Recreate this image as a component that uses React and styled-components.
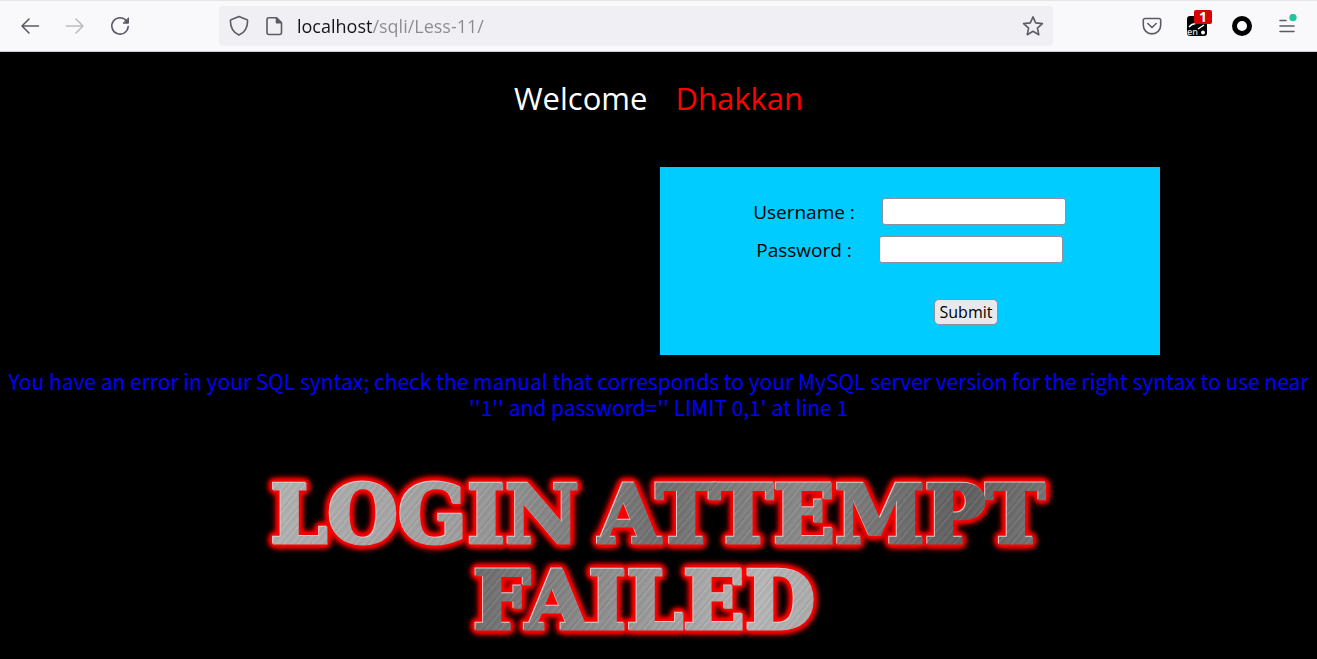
import React from "react";
import styled, { createGlobalStyle } from "styled-components";

const GlobalStyle = createGlobalStyle`
  * { box-sizing: border-box; }
  html { min-height: 100%; background: #000; }
  body {
    margin: 0;
    background: #000;
    font-family: "Open Sans", "Noto Sans", sans-serif;
  }
`;

const Toolbar = styled.header`
  display: flex;
  align-items: center;
  height: 52px;
  padding: 0 18px;
  background: #f9f9fb;
  border-top: 1px solid #e6e6ea;
  border-bottom: 1px solid #ccccd2;
`;

const Group = styled.div`
  display: flex;
  flex: ${(p) => p.$basis};
  justify-content: ${(p) => p.$justify || "flex-start"};
  gap: 21px;
`;

const IconButton = styled.button`
  position: relative;
  display: flex;
  align-items: center;
  justify-content: center;
  flex: none;
  width: 24px;
  height: 24px;
  padding: 0;
  border: 0;
  background: transparent;
  color: ${(p) => (p.disabled ? "#bdbdc1" : "#5b5b66")};
`;

const AddressBar = styled.div`
  display: flex;
  align-items: center;
  gap: 11px;
  flex: 818 1 0;
  height: 40px;
  padding: 0 8px;
  border-radius: 4px;
  background: #f0f0f4;
`;

const AddressInput = styled.input`
  flex: 1;
  min-width: 0;
  height: 28px;
  padding: 0;
  border: 0;
  outline: 0;
  font: 18px/28px "Open Sans", "Noto Sans", sans-serif;
  color: transparent;
  background: linear-gradient(to right, #15141a 76px, #8a8a90 76px);
  -webkit-background-clip: text;
  background-clip: text;
`;

const Count = styled.span`
  position: absolute;
  top: -4px;
  right: -3px;
  width: 18px;
  height: 14px;
  border-radius: 2px;
  background: #d90000;
  color: #fff;
  font: bold 14px/14px "Open Sans", sans-serif;
  text-align: center;
`;

const Page = styled.main`
  padding: 24px 8px 0;
  text-align: center;
`;

const Welcome = styled.h1`
  display: flex;
  justify-content: center;
  gap: 28px;
  margin: 0;
  font-size: 31px;
  line-height: 44px;
  font-weight: 400;
  color: #fff;
`;

const Name = styled.span`
  color: #f00;
`;

const LoginForm = styled.form`
  display: flex;
  flex-direction: column;
  align-items: center;
  gap: 11px;
  width: 500px;
  margin: 47px 0 0 calc(50% + 1px);
  padding: 31px 0 30px;
  background: #0cf;
`;

const Field = styled.label`
  display: flex;
  align-items: center;
  gap: 27px;
  font-size: 19px;
  line-height: 26px;
  color: #000;
`;

const TextBox = styled.input`
  width: 184px;
  height: 27px;
  border: 1px solid #8f8f9d;
  border-radius: 3px;
  background: #fff;
`;

const Actions = styled.div`
  padding: 25px 0 0 113px;
`;

const Submit = styled.button`
  display: block;
  height: 26px;
  padding: 0 5px;
  border: 1px solid #8f8f9d;
  border-radius: 5px;
  background: #e9e9ed;
  color: #000;
  font: 16px/24px "Open Sans", "Noto Sans", sans-serif;
`;

const ErrorText = styled.p`
  margin: 13px 0 0;
  font-family: "Noto Sans CJK SC", "Noto Sans", sans-serif;
  font-size: 21px;
  line-height: 26px;
  color: #00f;
`;

const Banner = styled.h2`
  margin: 52px 0 0;
  font: bold 81px/86px "DejaVu Serif", serif;
  filter: drop-shadow(-1px -1px 0 #d8d0d0) drop-shadow(0 0 2px #f00)
    drop-shadow(0 0 2px #f00) drop-shadow(0 0 2px #f00)
    drop-shadow(0 0 2px #f00);
`;

const BannerLine = styled.span`
  display: flex;
  justify-content: center;
  gap: 18px;
`;

const Metal = styled.span`
  color: transparent;
  -webkit-text-stroke: 3px transparent;
  background: repeating-linear-gradient(
      130deg,
      rgba(255, 255, 255, 0.07) 0 1px,
      rgba(0, 0, 0, 0.04) 3px 4px,
      rgba(255, 255, 255, 0.03) 7px 8px,
      rgba(0, 0, 0, 0.05) 10px 11px
    ),
    linear-gradient(${(p) => p.$shade});
  -webkit-background-clip: text;
  background-clip: text;
`;

const Icon = ({ children, size = 24 }) => (
  <svg
    width={size}
    height={size}
    viewBox="0 0 24 24"
    fill="none"
    stroke="currentColor"
    strokeWidth="1.6"
    strokeLinecap="round"
    strokeLinejoin="round"
    aria-hidden="true"
  >
    {children}
  </svg>
);

export default function App() {
  return (
    <>
      <GlobalStyle />
      <Toolbar>
        <Group $basis="201 1 0">
          <IconButton aria-label="Back">
            <Icon><path d="M20.5 12H4M11 5l-7 7 7 7" /></Icon>
          </IconButton>
          <IconButton aria-label="Forward" disabled>
            <Icon><path d="M3.5 12H20M13 5l7 7-7 7" /></Icon>
          </IconButton>
          <IconButton aria-label="Reload">
            <Icon>
              <path d="M18.600 7A8.200 8.200 0 1 0 20.200 12.500" />
              <path d="M20.500 4.200v5h-5z" fill="currentColor" strokeWidth="1" />
            </Icon>
          </IconButton>
        </Group>
        <AddressBar>
          <IconButton aria-label="Tracking protection">
            <Icon>
              <path d="M12 2.600l8 3.200c.4.2.6.5.6.9 0 6.300-2.300 11.600-8.600 14.400C5.700 18.300 3.400 13 3.400 6.700c0-.4.2-.7.6-.9z" />
            </Icon>
          </IconButton>
          <IconButton aria-label="Site information">
            <Icon>
              <path d="M7 3.800h7.500l5 5V18.500a2 2 0 0 1-2 2H7a2 2 0 0 1-2-2v-12.700a2 2 0 0 1 2-2z" />
              <path d="M14.500 4v4.800h4.800z" fill="currentColor" />
            </Icon>
          </IconButton>
          <AddressInput aria-label="Address" defaultValue="localhost/sqli/Less-11/" />
          <IconButton aria-label="Bookmark">
            <Icon>
              <path d="M12 2.900l2.700 6 6.700.7-5 4.500 1.400 6.600-5.800-3.400-5.800 3.400 1.400-6.600-5-4.500 6.700-.7z" />
            </Icon>
          </IconButton>
        </AddressBar>
        <Group $basis="246 1 0" $justify="flex-end">
          <IconButton aria-label="Pocket">
            <Icon>
              <path d="M5 4.500h14a1.700 1.700 0 0 1 1.700 1.700v5a8.700 8.700 0 0 1-17.400 0v-5A1.700 1.700 0 0 1 5 4.500z" />
              <path d="M7.800 9.500l4.200 4 4.200-4" />
            </Icon>
          </IconButton>
          <IconButton aria-label="Translator">
            <svg width="24" height="24" viewBox="0 0 24 24" aria-hidden="true">
              <rect x="2" y="2" width="20" height="20" rx="3" fill="#000" />
              <path d="M4 13c3-4 8-4 16-4M13 15l6-4" stroke="#fff" strokeWidth="1.500" fill="none" />
              <circle cx="18" cy="18.500" r="2" fill="#fff" />
              <text x="2" y="21" fontSize="9" fontWeight="600" fontFamily="Open Sans" fill="#ddd">en</text>
            </svg>
            <Count>1</Count>
          </IconButton>
          <IconButton aria-label="Extension">
            <svg width="24" height="24" viewBox="0 0 24 24" aria-hidden="true">
              <circle cx="12" cy="12" r="7.500" fill="#fff" stroke="#000" strokeWidth="5" />
            </svg>
          </IconButton>
          <IconButton aria-label="Menu">
            <Icon>
              <path d="M5 6.500h6M5 12h14M5 17.500h14" />
              <circle cx="18" cy="3.500" r="3.700" fill="#20c5a0" stroke="none" />
            </Icon>
          </IconButton>
        </Group>
      </Toolbar>
      <Page>
        <Welcome>
          <span>Welcome</span>
          <Name>Dhakkan</Name>
        </Welcome>
        <LoginForm onSubmit={(e) => e.preventDefault()}>
          <Field>
            Username :
            <TextBox type="text" name="uname" />
          </Field>
          <Field>
            Password :
            <TextBox type="text" name="passwd" />
          </Field>
          <Actions>
            <Submit type="submit">Submit</Submit>
          </Actions>
        </LoginForm>
        <ErrorText>
          You have an error in your SQL syntax; check the manual that corresponds to your MySQL
          server version for the right syntax to use near ''1'' and password='' LIMIT 0,1' at line 1
        </ErrorText>
        <Banner>
          <BannerLine>
            <Metal $shade="100deg, #b4b4b4, #a0a0a0 60%, #7c7c7c">LOGIN</Metal>
            <Metal $shade="100deg, #808080, #707070 15%, #8a8a8a 45%, #606060 80%, #777">
              ATTEMPT
            </Metal>
          </BannerLine>
          <BannerLine>
            <Metal $shade="100deg, #6c6c6c, #939393 40%, #b8b8b8 75%, #a6a6a6">
              FAILED&nbsp;
            </Metal>
          </BannerLine>
        </Banner>
      </Page>
    </>
  );
}
